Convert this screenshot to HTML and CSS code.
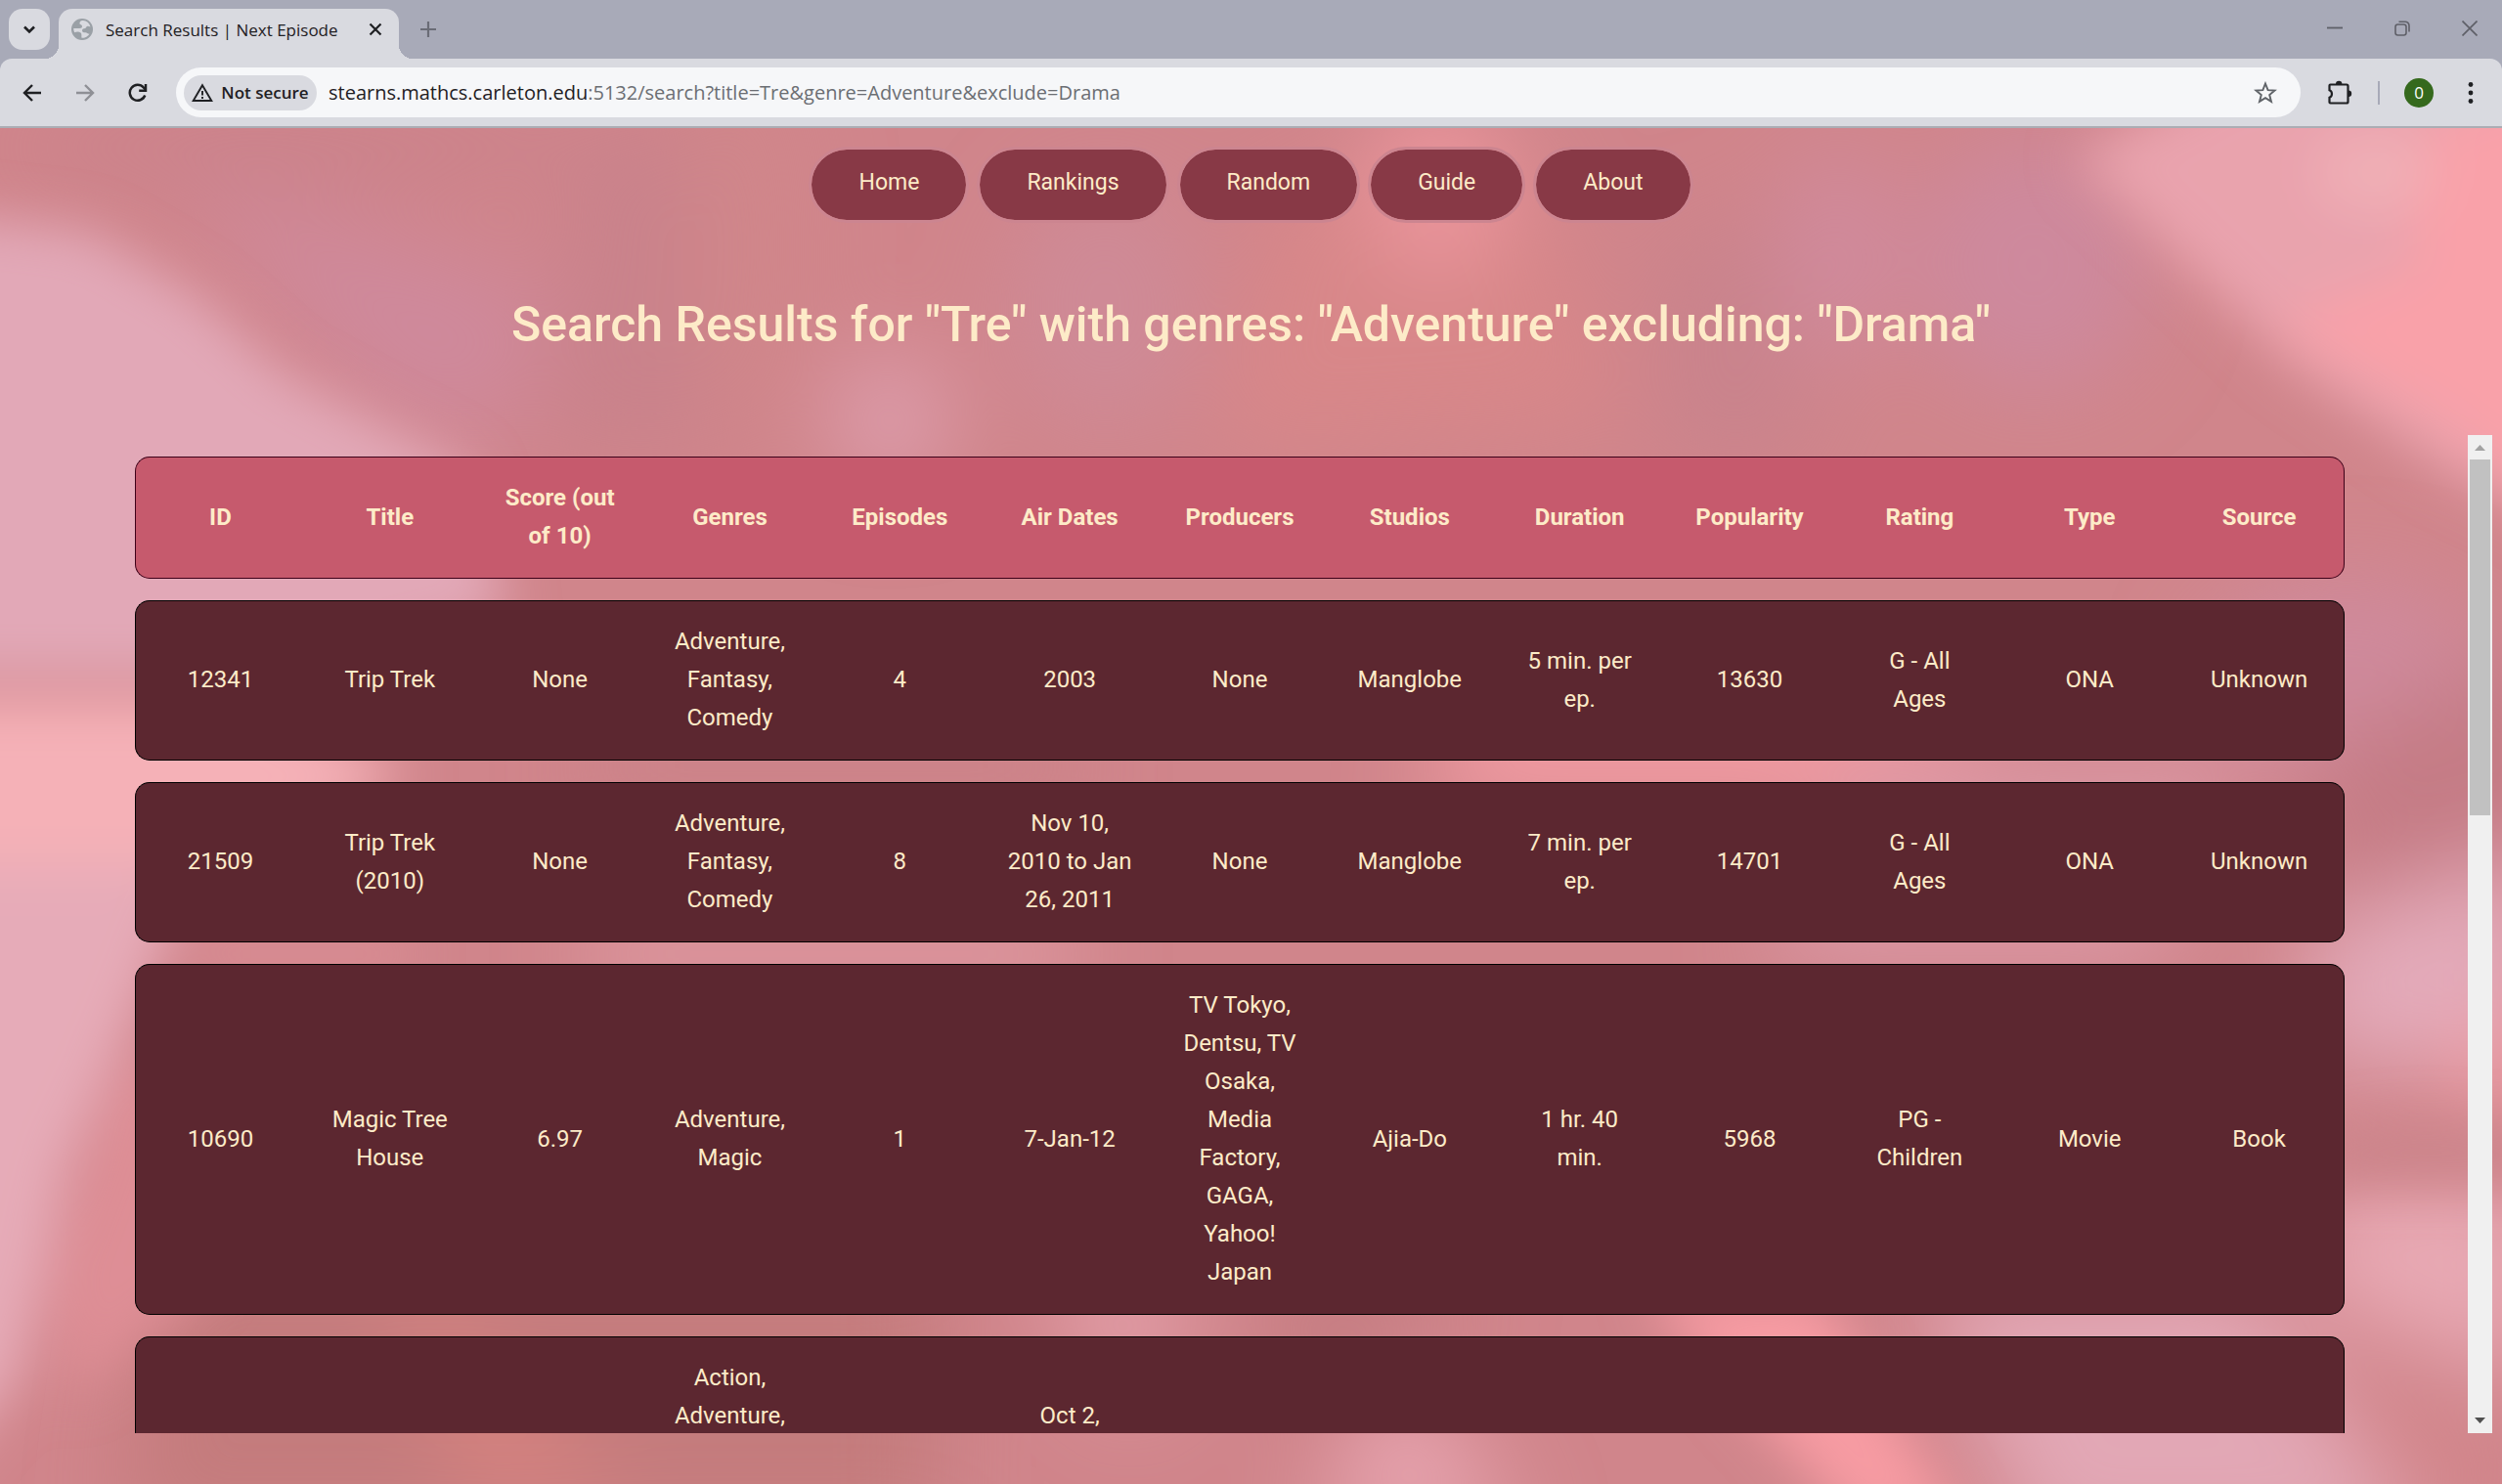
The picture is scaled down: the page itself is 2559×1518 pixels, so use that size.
FILE: index.html
```html
<!DOCTYPE html>
<html lang="en">
<head>
<meta charset="utf-8">
<title>Search Results | Next Episode</title>
<link rel="stylesheet" href="styles.css">
</head>
<body>
<header class="browser">
  <div class="tabstrip">
    <button class="tab-search" aria-label="Search tabs"><svg width="16" height="16" viewBox="0 0 16 16"><path d="M3 5.500l5 5 5-5" fill="none" stroke="#1f2023" stroke-width="2.600"/></svg></button>
    <div class="tab">
      <svg class="globe" width="22" height="22" viewBox="0 0 22 22"><circle cx="11" cy="11" r="11" fill="#9aa0a6"/><path d="M12 2c-3 0-3.500 1.500-3.500 3S11 6 11 8s-2 2-4.500 2H2.200c0 1.500.3 3 1 4.300 1.500-.8 4.500-1.300 6.300.2 1.500 1.300.5 3.500 1 5.300 4.500.2 6.500-2 8-4-2 0-2.500-1.500-4-1.500-2 0-3.500-.3-3.500-2s1.500-2 3-2.300c1.500-.3 1-2.200 2.700-2.200 1 0 2 .3 2.800.6C18.500 4.500 15.500 2.300 12 2z" fill="#d9dae0"/></svg>
      <span class="tab-title">Search Results | Next Episode</span>
      <button class="icon" aria-label="Close tab"><svg width="14" height="14" viewBox="0 0 14 14"><path d="M1.500 1.500l11 11M12.500 1.500l-11 11" stroke="#1f2023" stroke-width="2.200"/></svg></button>
    </div>
    <button class="icon new-tab" aria-label="New tab"><svg width="16" height="16" viewBox="0 0 16 16"><path d="M8 0v16M0 8h16" stroke="#6a6c76" stroke-width="2.200"/></svg></button>
    <div class="window-controls">
      <button class="icon" aria-label="Minimize"><svg width="16" height="16" viewBox="0 0 16 16"><path d="M0 7.500h16" stroke="#5f6068" stroke-width="1.800"/></svg></button>
      <button class="icon" aria-label="Restore"><svg width="16" height="16" viewBox="0 0 16 16" fill="none" stroke="#5f6068" stroke-width="1.600"><rect x="1" y="4" width="11" height="11" rx="2.500"/><path d="M4.500 1.200H11a4 4 0 0 1 4 4v6.300"/></svg></button>
      <button class="icon" aria-label="Close"><svg width="16" height="16" viewBox="0 0 16 16"><path d="M.5.5l15 15M15.500.5l-15 15" stroke="#5f6068" stroke-width="1.700"/></svg></button>
    </div>
  </div>
  <div class="toolbar">
    <div class="history">
      <button class="icon" aria-label="Back"><svg width="20" height="20" viewBox="0 0 20 20" fill="none" stroke="#1f2023" stroke-width="2.400"><path d="M19 10H2.500M10 2l-8 8 8 8"/></svg></button>
      <button class="icon" aria-label="Forward"><svg width="20" height="20" viewBox="0 0 20 20" fill="none" stroke="#8f9096" stroke-width="2.400"><path d="M1 10h16.500M10 2l8 8-8 8"/></svg></button>
      <button class="icon" aria-label="Reload"><svg width="20" height="20" viewBox="0 0 20 20" fill="none" stroke="#1f2023" stroke-width="2.500"><path d="M17.300 12.500A8 8 0 1 1 15.800 4.500L18 7"/><path d="M18 1v6.800h-6.800"/></svg></button>
    </div>
    <div class="omnibox">
      <button class="chip"><svg width="22" height="20" viewBox="0 0 22 20"><path d="M11 2.200L20.300 18H1.700z" fill="none" stroke="#1f2023" stroke-width="1.900"/><path d="M11 8v4.500M11 14v2" stroke="#1f2023" stroke-width="1.900"/></svg>Not secure</button>
      <div class="url"><span class="host">stearns.mathcs.carleton.edu</span>:5132/search?title=Tre&amp;genre=Adventure&amp;exclude=Drama</div>
      <button class="icon" aria-label="Bookmark"><svg width="24" height="24" viewBox="0 0 24 24"><path d="M12 2.500l2.600 6.600 7 .4-5.400 4.500 1.800 6.900-6-3.800-6 3.800 1.800-6.900L2.400 9.500l7-.4z" fill="none" stroke="#5f6368" stroke-width="1.900"/></svg></button>
    </div>
    <button class="icon extensions" aria-label="Extensions"><svg width="26" height="26" viewBox="0 0 26 26"><path d="M3.500 4.500H20a1.500 1.500 0 0 1 1.500 1.500V22a1.500 1.500 0 0 1-1.500 1.500H3.500a1 1 0 0 1-1-1v-4.800a4 4 0 0 0 0-7.400V5.500a1 1 0 0 1 1-1z" fill="none" stroke="#1f2023" stroke-width="2.200"/><path d="M9 4a3.200 3.200 0 0 1 6.400 0zM22 10.500a3.200 3.200 0 0 1 0 6.400z" fill="#1f2023"/></svg></button>
    <span class="divider"></span>
    <button class="avatar" aria-label="Profile">0</button>
    <button class="icon menu" aria-label="Menu"><svg width="6" height="22" viewBox="0 0 6 22" fill="#1f2023"><circle cx="3" cy="2.500" r="2.400"/><circle cx="3" cy="11" r="2.400"/><circle cx="3" cy="19.500" r="2.400"/></svg></button>
  </div>
</header>
<main class="page">
  <svg class="backdrop" viewBox="0 0 2559 1387" preserveAspectRatio="none" aria-hidden="true">
    <defs>
      <filter id="soft" x="-30%" y="-30%" width="160%" height="160%"><feGaussianBlur stdDeviation="26"/></filter>
      <filter id="haze" x="-60%" y="-60%" width="220%" height="220%"><feGaussianBlur stdDeviation="45"/></filter>
    </defs>
    <rect width="2559" height="1387" fill="#d0858b"/>
    <g filter="url(#haze)">
      <ellipse cx="300" cy="20" rx="300" ry="40" fill="#ca828b"/>
      <path d="M180 60Q420 110 560 160L520 330L380 280Z" fill="#cf899b"/>
      <path d="M590 0H760L720 330H560Z" fill="#c9828b"/>
      <ellipse cx="760" cy="120" rx="60" ry="200" fill="#d0868a"/>
      <ellipse cx="1130" cy="180" rx="100" ry="130" fill="#cf8a96"/>
      <path d="M1300 60L1560 20L1660 300L1240 330Z" fill="#d88789"/>
      <ellipse cx="1470" cy="60" rx="70" ry="90" fill="#eb959c"/>
      <path d="M1700 120L1800 90L1860 340H1700Z" fill="#c9838c"/>
      <ellipse cx="1880" cy="130" rx="60" ry="110" fill="#d08a9c"/>
      <ellipse cx="2080" cy="140" rx="120" ry="130" fill="#ce899d"/>
      <ellipse cx="910" cy="300" rx="60" ry="70" fill="#dd9dac"/>
      <ellipse cx="2400" cy="560" rx="150" ry="100" fill="#cf8a9c"/>
      <path d="M2380 620L2640 520V720L2360 790Z" fill="#c57c85"/>
      <path d="M2360 820L2600 740V960H2360Z" fill="#e3aaba"/>
      <path d="M2360 1080L2600 1070V1290L2360 1200Z" fill="#e8a9b4"/>
      <ellipse cx="2559" cy="960" rx="50" ry="50" fill="#f2a0a7"/>
      <path d="M1960 1180H2300L2480 1460H2080Z" fill="#e2a7b5"/>
      <path d="M2360 1270L2600 1400H2440Z" fill="#d4868a"/>
      <path d="M160 1160H960V1440H120Z" fill="#c47b7d"/>
      <path d="M390 1150L640 1400H480Z" fill="#d6827f"/>
      <path d="M1050 1170L1230 1180L1160 1320Z" fill="#e4a0aa"/>
      <path d="M1280 1180L1520 1190L1340 1300Z" fill="#c27a7f"/>
      <path d="M1400 1300L1470 1300L1560 1440H1340Z" fill="#e6a3ae"/>
      <path d="M600 620H1100V680H600Z" fill="#c98187"/>
      <path d="M1500 600H2050L1900 690H1450Z" fill="#f79fa6"/>
      <path d="M1900 640H2300L2200 860H1800Z" fill="#da96a3"/>
      <path d="M600 820H1100V870H600Z" fill="#e6a3ac"/>
    </g>
    <g filter="url(#soft)">
      <path d="M-80 85L90 105L200 170L290 250L480 350L520 500L300 560H-80Z" fill="#e2a8b7"/>
      <path d="M-80 585H260L420 660L230 760H-80Z" fill="#f5b1b7"/>
      <path d="M-80 755H200L130 930L70 1060L20 1280L-80 1400Z" fill="#e6abb8"/>
      <path d="M120 980L220 900V1180L70 1300L50 1180Z" fill="#de8e95"/>
      <path d="M2120 30L2280 -60L2640 -80V420L2500 350L2340 240Z" fill="#e9a3ad"/>
      <path d="M2440 20L2640 -60V420L2500 300L2330 200L2480 140Z" fill="#f9a1a9"/>
      <ellipse cx="2430" cy="45" rx="60" ry="40" fill="#f0afb6"/>
      <path d="M2360 1040Q2460 1000 2640 1040V1075H2360Z" fill="#ca8288"/>
      <path d="M1680 1190H1860L2010 1430H1900Z" fill="#f79ba3"/>
      <path d="M200 830H420V860H200Z" fill="#de9097"/>
    </g>
  </svg>
  <nav class="nav">
    <a href="#home">Home</a><a href="#rankings">Rankings</a><a href="#random">Random</a><a href="#guide">Guide</a><a href="#about">About</a>
  </nav>
  <h1>Search Results for "Tre" with genres: "Adventure" excluding: "Drama"</h1>
  <div class="results">
    <div class="scroller">
      <table>
        <thead>
          <tr><th>ID</th><th>Title</th><th>Score (out of 10)</th><th>Genres</th><th>Episodes</th><th>Air Dates</th><th>Producers</th><th>Studios</th><th>Duration</th><th>Popularity</th><th>Rating</th><th>Type</th><th>Source</th></tr>
        </thead>
        <tbody>
          <tr><td>12341</td><td>Trip Trek</td><td>None</td><td>Adventure, Fantasy, Comedy</td><td>4</td><td>2003</td><td>None</td><td>Manglobe</td><td>5 min. per ep.</td><td>13630</td><td>G - All<br>Ages</td><td>ONA</td><td>Unknown</td></tr>
          <tr><td>21509</td><td>Trip Trek (2010)</td><td>None</td><td>Adventure, Fantasy, Comedy</td><td>8</td><td>Nov 10,<br>2010 to Jan<br>26, 2011</td><td>None</td><td>Manglobe</td><td>7 min. per ep.</td><td>14701</td><td>G - All<br>Ages</td><td>ONA</td><td>Unknown</td></tr>
          <tr><td>10690</td><td>Magic Tree House</td><td>6.97</td><td>Adventure, Magic</td><td>1</td><td>7-Jan-12</td><td>TV Tokyo,<br>Dentsu, TV<br>Osaka,<br>Media<br>Factory,<br>GAGA,<br>Yahoo!<br>Japan</td><td>Ajia-Do</td><td>1 hr. 40<br>min.</td><td>5968</td><td>PG -<br>Children</td><td>Movie</td><td>Book</td></tr>
          <tr class="tall"><td></td><td></td><td></td><td>Action, Adventure,</td><td></td><td><br>Oct 2,</td><td></td><td></td><td></td><td></td><td></td><td></td><td></td></tr>
        </tbody>
      </table>
    </div>
    <div class="scrollbar" aria-hidden="true">
      <svg width="25" height="25" viewBox="0 0 25 25"><path d="M12.500 10l5.500 6H7z" fill="#a3a3a3"/></svg>
      <div class="track"><div class="thumb"></div></div>
      <svg width="25" height="25" viewBox="0 0 25 25"><path d="M12.500 15L7 9h11z" fill="#505050"/></svg>
    </div>
  </div>
</main>
</body>
</html>
```
FILE: styles.css
```css
* { box-sizing: border-box; }
body { margin: 0; height: 100vh; display: flex; flex-direction: column; overflow: hidden; font-family: Roboto, sans-serif; }
button { border: 0; padding: 0; background: none; font: inherit; color: inherit; }
svg { display: block; }
.browser { background: #a8aab8; border-bottom: 2px solid #abadb4; font-family: "Open Sans", sans-serif; color: #1f2023; }
.tabstrip { height: 60px; padding: 9px 25px 0 9px; display: flex; align-items: flex-start; }
.tab-search { width: 42px; height: 42px; border-radius: 14px; background: #d9dae0; display: grid; place-items: center; }
.tab { position: relative; width: 348px; height: 51px; margin-left: 9px; padding: 0 17px 9px 13px; display: flex; align-items: center; background: #d9dae0; border-radius: 14px 14px 0 0; font-size: 17px; }
.tab::before, .tab::after { content: ""; position: absolute; bottom: 0; width: 14px; height: 14px; }
.tab::before { right: 100%; background: radial-gradient(circle at 0 0, transparent 14px, #d9dae0 14px); }
.tab::after { left: 100%; background: radial-gradient(circle at 100% 0, transparent 14px, #d9dae0 14px); }
.tab-title { flex: 1; margin-left: 13px; white-space: nowrap; }
.new-tab { margin: 13px 0 0 22px; }
.window-controls { margin: 12px 0 0 auto; display: flex; gap: 53px; }
.toolbar { height: 69px; padding: 9px 29px 9px 23px; display: flex; align-items: center; background: #d9dae0; border-radius: 12px 12px 0 0; }
.history { display: flex; gap: 34px; margin-right: 29px; }
.omnibox { flex: 1; height: 51px; border-radius: 26px; background: #f6f7f9; padding: 0 24px 0 8px; display: flex; align-items: center; }
.chip { width: 136px; height: 36px; border-radius: 18px; background: #d9dae0; display: flex; align-items: center; justify-content: center; gap: 8px; font-size: 17px; font-weight: 600; white-space: nowrap; }
.url { flex: 1; margin-left: 12px; font-size: 20px; color: #6b6e73; }
.host { color: #1f2023; }
.extensions { margin-left: 27px; }
.divider { width: 2px; height: 24px; margin: 0 25px 0 26px; background: #a8aab8; }
.avatar { width: 30px; height: 30px; border-radius: 50%; background: #35691d; color: #fff; font-size: 17px; line-height: 30px; }
.menu { margin-left: 35px; }

.page { position: relative; z-index: 0; flex: 1; min-height: 0; display: flex; flex-direction: column; padding: 19px 10px 52px; color: #fdebc8; background: #d0868c; }
.backdrop { position: absolute; inset: 0; width: 100%; height: 100%; z-index: -1; }
.nav { display: flex; justify-content: center; gap: 8px; }
.nav a { padding: 20px 48px 24px; border: 3px solid #cc8590; border-radius: 39px; background: #883946; background-clip: padding-box; color: inherit; font-size: 23px; line-height: 28px; text-decoration: none; }
h1 { margin: 68px 0 77px; text-align: center; font-size: 50px; line-height: 72px; font-weight: 500; }
.results { flex: 1; min-height: 0; display: flex; }
.scroller { flex: 1; overflow: hidden; padding: 0 126px 0 128px; }
table { width: 100%; table-layout: fixed; border-collapse: separate; border-spacing: 0 22px; font-size: 24px; line-height: 39px; text-align: center; }
th, td { padding: 22px 22px 23px; border: solid #000; border-width: 1px 0; background: #5c2730; }
th { background: #c65a6d; border-color: #3d0018; font-weight: 700; }
th:first-child, td:first-child { border-left-width: 1px; border-radius: 15px 0 0 15px; }
th:last-child, td:last-child { border-right-width: 1px; border-radius: 0 15px 15px 0; }
.tall td { height: 242px; vertical-align: top; }
.scrollbar { width: 25px; background: #f0f0f0; display: flex; flex-direction: column; }
.track { flex: 1; padding: 0 2px; }
.thumb { height: 37.500%; background: #c1c1c1; }
```
